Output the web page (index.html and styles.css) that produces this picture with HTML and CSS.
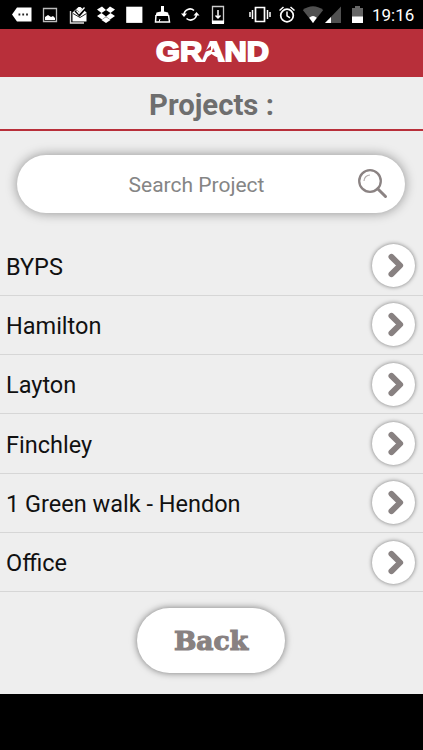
FILE: index.html
```
<!DOCTYPE html>
<html lang="en">
<head>
    <meta charset="UTF-8">
    <meta name="viewport" content="width=device-width, initial-scale=1.0">
    <title>Projects</title>
    <link rel="stylesheet" href="styles.css">
</head>
<body>
    <div class="status-bar">
        <div class="notifications">
            <svg viewBox="0 0 28 29"><path d="M4 14.5L9 7.5h14.5v14H9z" fill="#fff"/><path d="M10.5 14.5h1.8M14.3 14.5h1.8M18.1 14.5h1.8" stroke="#222" stroke-width="2"/></svg>
            <svg viewBox="0 0 28 29"><path d="M7.5 8.5h13v13h-13z" fill="none" stroke="#bbb" stroke-width="1.3"/><path d="M9 20v-3l3-2 3 2 2-1 2 2v2z" fill="#fff"/></svg>
            <svg viewBox="0 0 28 29"><path d="M6.5 11v12H20" fill="none" stroke="#ddd" stroke-width="1.4"/><path d="M8.5 12.5l6-5.5h2l6 5.5v9h-14z" fill="#fff"/><path d="M9 13.5l7 4 6.5-4" fill="none" stroke="#222"/><path d="M11.5 10.500l4 4 6-7" fill="none" stroke="#000" stroke-width="3"/><path d="M12.5 10.5l2.5 3 5.5-6" fill="none" stroke="#fff" stroke-width="1.3"/></svg>
            <svg viewBox="0 0 28 29"><path d="M10 6.5l4 3.5-4.500 3L5 9.500zM18 6.500L14 10l4.500 3L23 9.500zM9.500 13l4.500 3.500-4 3-5-3.500zM18.500 13L14 16.500l4 3 5-3.500zM9.500 20l4.500-3 4.500 3-4.500 3z" fill="#fff"/></svg>
            <svg viewBox="0 0 28 29"><path d="M6.2 6.7h16.200v16.200H6.200z" fill="#fff"/></svg>
            <svg viewBox="0 0 28 29"><path d="M13 6h3v5.500l4 1 1 3.500H7.500l1-3.500 4.500-1z" fill="#fff"/><path d="M8 15l-.5 7h14l-1-7" fill="none" stroke="#fff" stroke-width="1.5"/><path d="M11 22l1-3" stroke="#fff"/></svg>
            <svg viewBox="0 0 28 29"><path d="M8 14.5A6 6 0 0 1 18 10.500M20.500 14.500A6 6 0 0 1 10.500 18.500" fill="none" stroke="#fff" stroke-width="1.6"/><path d="M5 13.5h6l-3 3.500zM17.500 15.500h6l-3-3.500z" fill="#fff"/></svg>
            <svg viewBox="0 0 28 29"><path d="M8.5 6.5h11v16h-11z" fill="none" stroke="#ccc" stroke-width="1.3"/><path d="M8 20.5h12V24H8z" fill="#fff"/><path d="M14 10v8M11.5 15.5L14 18l2.500-2.500" fill="none" stroke="#fff" stroke-width="1.5"/></svg>
        </div>
        <div class="system">
            <svg class="vibrate" viewBox="0 0 26 29"><path d="M8.5 7.5h9v14h-9z" fill="none" stroke="#fff" stroke-width="1.7"/><path d="M5.5 10v9M3 12v5M20.5 10v9M23 12v5" stroke="#fff" stroke-width="1.5"/></svg>
            <svg class="alarm" viewBox="0 0 26 29"><circle cx="13" cy="15.5" r="6.3" fill="none" stroke="#fff" stroke-width="1.7"/><path d="M5.5 10.5l4-3.500M20.500 10.500l-4-3.500M13 11.500v4.300l3 2" fill="none" stroke="#fff" stroke-width="1.5"/></svg>
            <svg class="wifi" viewBox="0 0 22 29"><path d="M.8 10Q11 2.500 21.200 10L11 23z" fill="#505050"/><path d="M7.200 17.700Q11 14.500 14.800 17.700L11 23z" fill="#fff"/></svg>
            <svg class="signal" viewBox="0 0 18 29"><path d="M1 23L17 6.500V23z" fill="#505050"/><path d="M1 23l6-6v6z" fill="#fff"/></svg>
            <svg class="battery" viewBox="0 0 14 29"><path d="M4 6h5v2h3v9H1V8h3z" fill="#666"/><path d="M1 16.500h11V23H1z" fill="#fff"/></svg>
            <span class="clock">19:16</span>
        </div>
    </div>

    <div class="brand">
        <svg viewBox="0 0 120 48">
            <text class="brand-name" x="4" y="32" textLength="113" lengthAdjust="spacingAndGlyphs">GRAND</text>
            <path class="brand-cut" d="M52 35l3.500-7 4-3 3 2 3 1.500-1 6.500zM59 17l-7 6 7-2z"/>
        </svg>
    </div>

    <h1>Projects :</h1>

    <div class="content">
        <form class="search">
            <input type="text" placeholder="Search Project">
            <svg class="search-icon" viewBox="0 0 32 32">
                <circle cx="13" cy="13" r="10.800" fill="none" stroke="#8b8383" stroke-width="2.300"/>
                <path d="M7 13a6 6 0 0 1 6-6" fill="none" stroke="#b5afaf" stroke-width="1.200"/>
                <path d="M20.700 20.700l7.800 7.800" stroke="#8b8383" stroke-width="3" stroke-linecap="round"/>
            </svg>
        </form>

        <ul class="projects">
            <li>BYPS <a class="go" href="#"><svg viewBox="0 0 42 42"><path d="M19 12.500l8.500 8.500-8.500 8.500"/></svg></a></li>
            <li>Hamilton <a class="go" href="#"><svg viewBox="0 0 42 42"><path d="M19 12.500l8.500 8.500-8.500 8.500"/></svg></a></li>
            <li>Layton <a class="go" href="#"><svg viewBox="0 0 42 42"><path d="M19 12.500l8.500 8.500-8.500 8.500"/></svg></a></li>
            <li>Finchley <a class="go" href="#"><svg viewBox="0 0 42 42"><path d="M19 12.500l8.500 8.500-8.500 8.500"/></svg></a></li>
            <li>1 Green walk - Hendon <a class="go" href="#"><svg viewBox="0 0 42 42"><path d="M19 12.500l8.500 8.500-8.500 8.500"/></svg></a></li>
            <li>Office <a class="go" href="#"><svg viewBox="0 0 42 42"><path d="M19 12.500l8.500 8.500-8.500 8.500"/></svg></a></li>
        </ul>

        <button class="back" type="button">Back</button>
    </div>
</body>
</html>
```
FILE: styles.css
```
* {
    box-sizing: border-box;
}

body {
    font-family: Roboto, sans-serif;
    background-color: #000;
    margin: 0;
    height: 750px;
    overflow: hidden;
}

svg {
    display: block;
}

.status-bar {
    display: flex;
    justify-content: space-between;
    height: 29px;
    padding: 0 9px 0 8px;
    color: #fff;
}

.notifications,
.system {
    display: flex;
}

.notifications svg {
    width: 28px;
    height: 29px;
}

.system svg {
    height: 29px;
}

.vibrate,
.alarm {
    width: 26px;
    margin-right: 1px;
}

.wifi {
    width: 22px;
    margin-left: 1px;
}

.signal {
    width: 18px;
}

.battery {
    width: 14px;
    margin-left: 9px;
}

.clock {
    width: 42px;
    margin-left: 7px;
    font-size: 17px;
    line-height: 31px;
    white-space: nowrap;
}

.brand {
    display: flex;
    justify-content: center;
    height: 48px;
    background-color: #b82f3a;
}

.brand svg {
    width: 120px;
    height: 48px;
}

.brand-name {
    font-family: "Liberation Sans", Arial, sans-serif;
    font-size: 28px;
    font-weight: bold;
    fill: #fff;
    stroke: #fff;
    stroke-width: 1.8px;
}

.brand-cut {
    fill: #b82f3a;
}

h1 {
    height: 54px;
    margin: 0;
    border-bottom: 2px solid #b82f3a;
    background-color: #eee;
    color: #6e6e6e;
    font-size: 29.3px;
    font-weight: bold;
    line-height: 56px;
    text-align: center;
}

.content {
    height: 563px;
    padding-top: 24px;
    background-color: #eee;
}

.search {
    display: flex;
    align-items: center;
    width: 388px;
    height: 58px;
    margin: 0 0 23.5px 17px;
    padding-right: 16px;
    border-radius: 29px;
    background-color: #fff;
    box-shadow: 0 0 12px rgba(0, 0, 0, 0.4);
}

.search input {
    flex: 1;
    min-width: 0;
    padding: 2px 0 0 19px;
    border: none;
    outline: none;
    background: none;
    font-family: inherit;
    font-size: 21px;
    text-align: center;
}

.search input::placeholder {
    color: #858585;
}

.search-icon {
    width: 32px;
    height: 32px;
}

.projects {
    list-style: none;
    margin: 0;
    padding: 0;
}

.projects li {
    display: flex;
    justify-content: space-between;
    align-items: center;
    height: 59.3px;
    padding: 2px 8px 0 6px;
    border-bottom: 1px solid #d6d6d6;
    color: #111;
    font-size: 23.5px;
}

.go {
    width: 43px;
    height: 43px;
    margin-bottom: 2px;
    border-radius: 50%;
    background-color: #fff;
    box-shadow: 0 0 4px rgba(0, 0, 0, 0.5);
}

.go path {
    fill: none;
    stroke: #888181;
    stroke-width: 5.8px;
    stroke-linecap: round;
    stroke-linejoin: round;
}

.back {
    display: block;
    width: 148px;
    height: 65px;
    margin: 15.7px 0 0 137px;
    border: none;
    border-radius: 33px;
    background-color: #fff;
    box-shadow: 0 0 7px rgba(0, 0, 0, 0.5);
    color: #888181;
    font-family: "Cooper Black", "DejaVu Serif", serif;
    font-size: 26.5px;
    font-weight: bold;
    -webkit-text-stroke: 1.2px #888181;
}
```
